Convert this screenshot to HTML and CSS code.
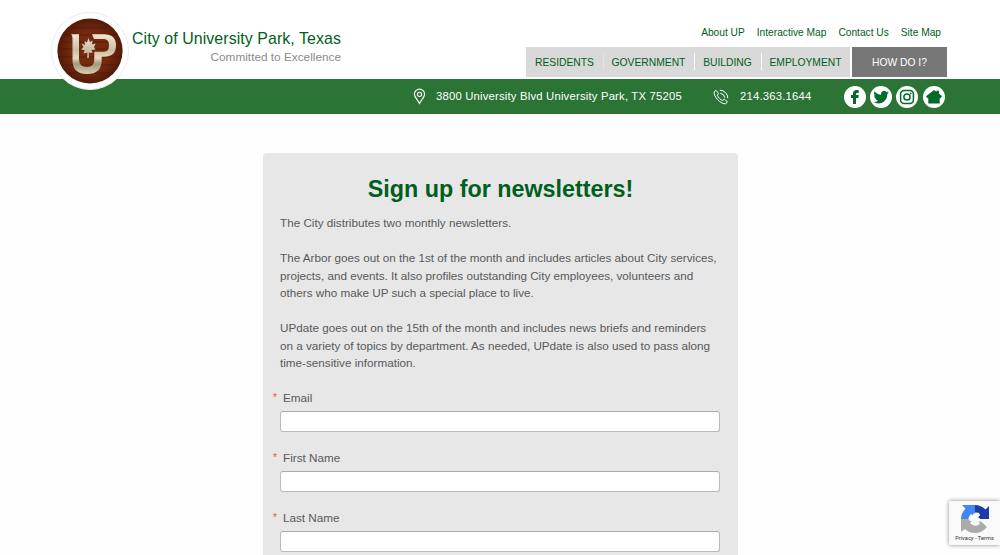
FILE: index.html
```html
<!DOCTYPE html>
<html lang="en">
<head>
<meta charset="utf-8">
<title>City of University Park, Texas</title>
<link rel="stylesheet" href="styles.css">
</head>
<body>
<header class="header">
  <div class="brand">
    <svg class="seal" viewBox="0 0 80 80" role="img" aria-label="University Park seal">
      <defs>
        <linearGradient id="metal" x1="0" y1="23" x2="0" y2="63" gradientUnits="userSpaceOnUse">
          <stop offset="0" stop-color="#f3ead6"/><stop offset=".4" stop-color="#c9bea1"/><stop offset=".6" stop-color="#e4dbc2"/><stop offset=".75" stop-color="#a0977c"/><stop offset="1" stop-color="#d8cfb4"/>
        </linearGradient>
        <radialGradient id="wood"><stop offset=".6" stop-color="#75290f"/><stop offset="1" stop-color="#541a08"/></radialGradient>
      </defs>
      <circle cx="40" cy="40" r="38.500" fill="#fff" stroke="#ececec"/>
      <circle cx="40" cy="40" r="32.600" fill="url(#wood)"/>
      <path d="M22 17h36M14 24h52M9 31h62M8 38h64M8 46h64M11 54h58M17 62h46" stroke="#46150a" opacity=".5"/>
      <g id="monogram" fill="url(#metal)">
        <path d="M21 23.300H29V48Q29 56 37 56Q44.300 56 44.300 48V40.700H54Q59 40.700 59 34.500Q59 28 54 28H44L42 23.300H54Q66 23.300 66 34.500Q66 45.700 54 45.700H51.700V49Q51.700 63 37 63Q22.500 63 22.500 49V27Q22.500 24.500 21 23.300Z"/>
        <path d="M38.300 27L40 31L42.500 29.500L42 33.500L45.700 32.500L44 36L45.500 38.500L41.500 39L42.500 42L38.800 41.500L38.700 47H37.300L37.500 41.500L33.500 42.500L34.700 39.300L31 38.500L33.500 36L31.500 32.500L35 34L34.500 30L37 31.500Z"/>
      </g>
    </svg>
    <div class="names">
      <div class="city">City of University Park, Texas</div>
      <div class="motto">Committed to Excellence</div>
    </div>
  </div>
  <div class="menus">
    <nav class="quick"><a>About UP</a><a>Interactive Map</a><a>Contact Us</a><a>Site Map</a></nav>
    <nav class="main-nav">
      <a class="residents">RESIDENTS</a><a class="government">GOVERNMENT</a><a class="building">BUILDING</a><a class="employment">EMPLOYMENT</a><a class="how">HOW DO I?</a>
    </nav>
  </div>
</header>
<div class="contact-bar">
  <svg class="pin" viewBox="0 0 14 18"><path d="M7 16.500C5 12.500 1.500 10 1.500 6.500a5.500 5.500 0 0 1 11 0C12.500 10 9 12.500 7 16.500Z"/><circle cx="7" cy="6.700" r="2.300"/></svg>
  <span class="address">3800 University Blvd University Park, TX 75205</span>
  <svg class="phone" viewBox="0 0 16 16"><path d="M3 1.300 1.300 2.700C-.500 6.500 8 15.800 12.700 14.700L14.500 12.900 11.400 10.200 9.500 11.500C7.500 10.800 5 8.300 4.300 6.300L5.500 4.300Z"/><path d="M6.800 1.200A8 8 0 0 1 14.800 9.200M7.300 4.300A5 5 0 0 1 11.700 8.700"/></svg>
  <span class="number">214.363.1644</span>
  <div class="social">
    <svg viewBox="0 0 22 22"><circle cx="11" cy="11" r="11"/><path class="mark" d="M9 18V12H7V9H9V7.500Q9 4 12.500 4H14.700V7H13Q12 7 12 8.200V9H14.700L14.300 12H12V18Z"/></svg>
    <svg viewBox="0 0 22 22"><circle cx="11" cy="11" r="11"/><path class="mark" transform="translate(3.500 3.500) scale(.64)" d="M23.950 4.570a10 10 0 0 1-2.820.770 4.960 4.960 0 0 0 2.160-2.720c-.950.550-2 .950-3.130 1.190a4.920 4.920 0 0 0-8.380 4.480C7.690 8.100 4.070 6.130 1.640 3.160a4.920 4.920 0 0 0 1.520 6.570 4.900 4.900 0 0 1-2.230-.610v.060a4.920 4.920 0 0 0 3.950 4.830 5 5 0 0 1-2.210.080 4.940 4.940 0 0 0 4.600 3.420A9.870 9.870 0 0 1 0 19.540a14 14 0 0 0 7.550 2.210c9.050 0 14-7.500 14-13.980v-.640a10 10 0 0 0 2.400-2.560Z"/></svg>
    <svg viewBox="0 0 22 22"><circle cx="11" cy="11" r="11"/><g class="outline"><rect x="4.600" y="4.600" width="12.800" height="12.800" rx="3.500"/><circle cx="11" cy="11" r="3.100"/></g><circle class="mark" cx="14.700" cy="7.300" r=".9"/></svg>
    <svg viewBox="0 0 22 22"><circle cx="11" cy="11" r="11"/><path class="mark" d="M11 4 13.500 5.700V4.800H16V7.400L19 10.300 17.500 12.200H16.700V17.500H5.300V12.200H4.500L3 10.300Z"/></svg>
  </div>
</div>
<main class="panel">
  <h1>Sign up for newsletters!</h1>
  <p>The City distributes two monthly newsletters.</p>
  <p>The Arbor goes out on the 1st of the month and includes articles about City services,<br>projects, and events. It also profiles outstanding City employees, volunteers and<br>others who make UP such a special place to live.</p>
  <p>UPdate goes out on the 15th of the month and includes news briefs and reminders<br>on a variety of topics by department. As needed, UPdate is also used to pass along<br>time-sensitive information.</p>
  <form>
    <div class="field"><label for="email"><span class="required">*</span>Email</label><input id="email" type="email"></div>
    <div class="field"><label for="first"><span class="required">*</span>First Name</label><input id="first" type="text"></div>
    <div class="field"><label for="last"><span class="required">*</span>Last Name</label><input id="last" type="text"></div>
  </form>
</main>
<aside class="captcha">
  <svg viewBox="0 0 28 28">
    <path fill="#1c3aa9" d="M14 0Q20 0 24.500 4.500L28 1V14H15L19 10Q17.500 7.500 14 7.500Z"/>
    <path fill="#4285f4" d="M14 0V13L10 9Q7.500 11 7.500 14H0Q0 8.500 4.500 3.500L1 0Z"/>
    <path fill="#ababab" d="M0 14H13L9 18Q12 21.500 16 20.500Q18 20 19 18.500L16 15.500H19L26 22Q21 28 14 28Q8 28 4 24L0 27Z"/>
    <path fill="#f9f9f9" d="M14 8Q18 6.500 19 10L17 12.500Q21 14 19 17L14.500 16Q14 20.500 10 19L10.500 16Q6.500 16 8 12L12 12.500Q10 9 14 8Z"/>
  </svg>
  <div>Privacy - Terms</div>
</aside>
</body>
</html>
```
FILE: styles.css
```css
* { box-sizing: border-box; }
html, body { height: 100%; overflow: hidden; }
body { margin: 0; background: #fefefe; font-family: "Liberation Sans", Arial, sans-serif; font-size: 11.69px; color: #58595b; }
.header { height: 79px; padding: 0 53px 0 50px; background: #fff; display: flex; justify-content: space-between; }
.brand { display: flex; align-items: flex-start; }
.seal { position: relative; z-index: 1; width: 80px; height: 80px; margin-top: 11px; flex: none; }
.names { width: 213px; padding: 29px 2px 0 2px; white-space: nowrap; }
.city { color: #005e20; font-size: 15.9px; line-height: 20px; letter-spacing: .09px; }
.motto { color: #8b8b8b; font-size: 11.8px; line-height: 16px; text-align: right; }
.menus { width: 421px; }
.quick { display: flex; justify-content: flex-end; gap: 12px; height: 47px; padding: 26px 6px 0 0; color: #005e20; font-size: 10.2px; line-height: 13px; white-space: nowrap; }
.main-nav { display: flex; height: 30px; font-size: 10.3px; line-height: 31px; color: #005e20; text-align: center; }
.main-nav a { background: #d9d9d9; flex: none; }
.residents { width: 77px; }
.government { width: 91px; }
.building { width: 67px; }
.employment { width: 89px; }
.main-nav .building, .main-nav .employment { background: linear-gradient(#fff, #fff) 0 6px / 1px 17px no-repeat #d9d9d9; }
.main-nav .government { background: linear-gradient(#e3e3e3, #e3e3e3) 0 6px / 1px 17px no-repeat #d9d9d9; }
.main-nav .how { width: 95px; margin-left: 2px; background: #777; color: #fff; }
.contact-bar { height: 35px; background: #2b7435; display: flex; align-items: center; padding-left: 413px; color: #fff; font-size: 11.3px; letter-spacing: .19px; white-space: nowrap; }
.contact-bar svg { flex: none; }
.pin, .phone { fill: none; stroke: #fff; stroke-width: 1.2; }
.pin { width: 13px; height: 17px; margin-right: 10px; }
.address, .number { padding-bottom: 1px; }
.address { width: 277px; }
.phone { width: 16px; height: 16px; margin-right: 11px; stroke-width: 1; }
.number { width: 104px; }
.social { display: flex; gap: 4.4px; margin-left: -.5px; }
.social svg { width: 22px; height: 22px; fill: #fff; }
.social .mark { fill: #006b2a; }
.social .outline { fill: none; stroke: #006b2a; stroke-width: 1.5; }
.panel { width: 475px; height: 402px; overflow: hidden; margin: 39px 0 0 263px; padding: 19px 17px 0; background: #e7e7e7; border-radius: 4px 4px 0 0; line-height: 17.5px; }
h1 { margin: 0 0 7px; color: #005e20; font-size: 23.3px; line-height: 35px; text-align: center; }
p { margin: 0 0 17.5px; white-space: nowrap; }
.field { height: 60px; }
.field:last-child { height: 43px; }
label { display: flex; height: 21.5px; margin-left: -7px; }
.required { width: 10px; color: #f04b3c; font-size: 10px; }
input { display: block; width: 440px; height: 21px; border: 1px solid #b8babc; border-top-color: #a9acaf; border-radius: 3px; background: #fff; }
.captcha { position: absolute; right: 0; top: 501px; width: 51px; height: 44px; padding-top: 4px; background: #f9f9f9; border-radius: 2px 0 0 2px; box-shadow: 0 0 4px #888; text-align: center; font-family: Roboto, sans-serif; font-size: 5.7px; line-height: 10px; color: #333; white-space: nowrap; }
.captcha svg { display: block; width: 28px; height: 28px; margin: 0 auto; }
```
